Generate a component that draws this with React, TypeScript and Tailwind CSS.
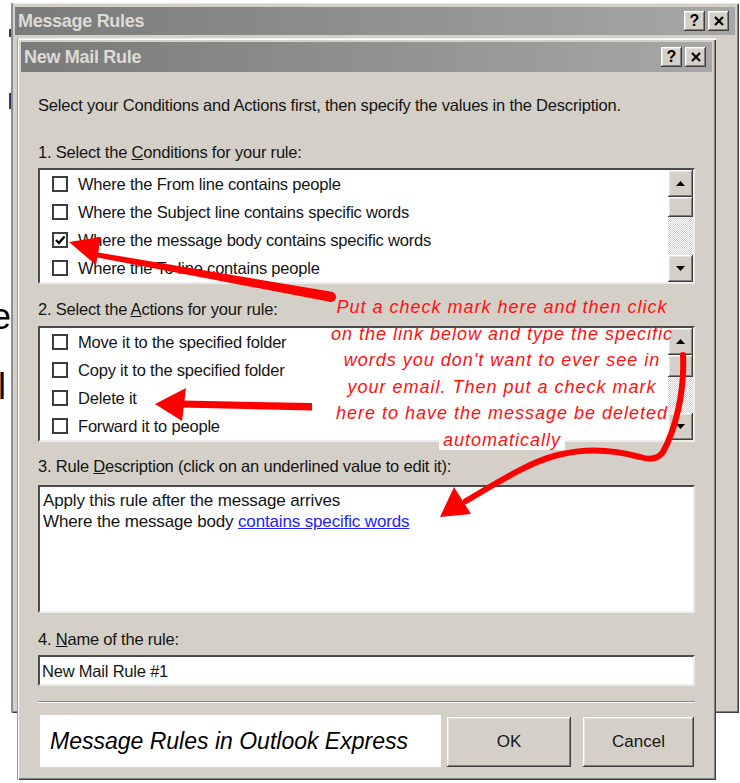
import React from "react";

const CONDITIONS = [
  { label: "Where the From line contains people", checked: false },
  { label: "Where the Subject line contains specific words", checked: false },
  { label: "Where the message body contains specific words", checked: true },
  { label: "Where the To line contains people", checked: false },
];

const ACTIONS = [
  "Move it to the specified folder",
  "Copy it to the specified folder",
  "Delete it",
  "Forward it to people",
];

const raised =
  "bg-[#d4d0c8] shadow-[inset_-1px_-1px_#404040,inset_1px_1px_#ffffff,inset_-2px_-2px_#808080,inset_2px_2px_#e6e4df]";
const sunken =
  "bg-white border-2 border-t-[#4a4a4a] border-l-[#4a4a4a] border-r-[#ececec] border-b-[#ececec]";

function CaptionButton({ children }: { children: React.ReactNode }) {
  return (
    <div className={`${raised} w-[21px] h-[20px] flex items-center justify-center text-black`}>
      {children}
    </div>
  );
}

function TitleBar({ title, className }: { title: string; className: string }) {
  return (
    <div
      className={`flex items-center justify-between bg-linear-to-r from-[#7a7a7a] to-[#a7a7a7] pl-[3px] pr-[6px] ${className}`}
    >
      <span className="text-[18px] font-bold tracking-[-0.3px] text-[#dddbd6]">{title}</span>
      <div className="flex gap-[3px]">
        <CaptionButton>
          <span className="text-[16px] font-bold leading-none">?</span>
        </CaptionButton>
        <CaptionButton>
          <svg width="10" height="10" viewBox="0 0 10 10">
            <path d="M1 1 L9 9 M9 1 L1 9" stroke="#000" strokeWidth="2.2" />
          </svg>
        </CaptionButton>
      </div>
    </div>
  );
}

function Checkbox({ checked }: { checked?: boolean }) {
  return (
    <span className="w-[16px] h-[16px] shrink-0 bg-white border-2 border-[#3e3e3e] flex items-center justify-center">
      {checked && (
        <svg width="12" height="12" viewBox="0 0 12 12">
          <path d="M2 6 L5 9 L10.5 2.5" fill="none" stroke="#000" strokeWidth="2.4" />
        </svg>
      )}
    </span>
  );
}

function Arrow({ up }: { up?: boolean }) {
  return (
    <div className={`${raised} h-[27px] flex items-center justify-center`}>
      <svg width="9" height="5" viewBox="0 0 9 5">
        <polygon points={up ? "0,5 9,5 4.5,0" : "0,0 9,0 4.5,5"} fill="#000" />
      </svg>
    </div>
  );
}

function ScrollBar({ thumb }: { thumb: string }) {
  return (
    <div className="w-[25px] shrink-0 flex flex-col">
      <Arrow up />
      <div className={`${raised} ${thumb}`} />
      <div className="flex-1 bg-[conic-gradient(#ffffff_25%,#d4d0c8_0_50%,#ffffff_0_75%,#d4d0c8_0)] bg-[length:2px_2px]" />
      <Arrow />
    </div>
  );
}

function RuleList({
  items,
  thumb,
  className,
}: {
  items: { label: string; checked: boolean }[];
  thumb: string;
  className: string;
}) {
  return (
    <div className={`${sunken} h-[116px] flex ${className}`}>
      <div className="flex-1 flex flex-col">
        {items.map((it) => (
          <div key={it.label} className="h-[28px] flex items-center gap-[10px] pl-[12px]">
            <Checkbox checked={it.checked} />
            <span>{it.label}</span>
          </div>
        ))}
      </div>
      <ScrollBar thumb={thumb} />
    </div>
  );
}

function Annotations() {
  return (
    <>
      <div className="absolute left-[318px] top-[294px] w-[368px] text-center italic text-[18px] leading-[26.5px] tracking-[1px] text-[#ff1010] pointer-events-none">
        Put a check mark here and then click
        <br />
        on the link below and type the specific
        <br />
        words you don't want to ever see in
        <br />
        your email. Then put a check mark
        <br />
        here to have the message be deleted
        <br />
        <span className="bg-white px-[4px]">automatically</span>
      </div>
      <svg
        className="absolute inset-0 pointer-events-none"
        width="740"
        height="783"
        viewBox="0 0 740 783"
      >
        {/* to the checked condition */}
        <polygon points="92,251.5 333,292 331,302 92,256.5" fill="#f00" />
        <circle cx="331" cy="297" r="5" fill="#f00" />
        <polygon points="69,242 101,237 96,265" fill="#f00" />
        {/* to "Delete it" */}
        <polygon points="182,400.5 312,403 312,410.5 182,407.5" fill="#f00" />
        <polygon points="155,404 186,388 182,421" fill="#f00" />
        {/* down to the description link */}
        <path
          d="M683 355 C685 395 674 432 663 452 Q656 462 640 457 C615 450 585 448 558 455 C530 462 505 478 466 501"
          fill="none"
          stroke="#f00"
          strokeWidth="6"
          strokeLinecap="round"
        />
        <polygon points="440,517 454,487 471,514" fill="#f00" />
      </svg>
    </>
  );
}

export default function App() {
  return (
    <div className="relative flex w-[740px] h-[783px] overflow-hidden bg-white font-['Liberation_Sans',Arial,sans-serif] text-[#141414]">
      {/* bits of the page behind the windows */}
      <div className="w-[11px] shrink-0 overflow-hidden flex flex-col items-end text-black">
        <span className="mt-[29px] w-[2px] h-[8px] bg-[#2f3b5c]" />
        <span className="mt-[56px] w-[2px] h-[16px] bg-[#2f3b5c]" />
        <span className="mt-[188px] text-[36px] leading-[40px]">e</span>
        <span className="mt-[30px] mr-[5px] text-[36px] leading-[40px]">l</span>
      </div>

      {/* Message Rules window */}
      <div className="mt-[3px] w-[728px] h-[710px] shrink-0 bg-[#d4d0c8] p-[4px] shadow-[inset_2px_0_#8f8f8f,inset_0_1px_#e6e6e6,inset_-1px_-1px_#404040,inset_-2px_-2px_#808080]">
        <TitleBar title="Message Rules" className="h-[28px]" />

        {/* New Mail Rule dialog */}
        <div className="ml-[2px] mt-[3px] w-[699px] h-[742px] bg-[#d4d0c8] p-[4px] shadow-[inset_1px_0_#9a9a9a,inset_0_1px_#ececec,inset_2px_2px_#ffffff,inset_-1px_-1px_#404040,inset_-2px_-2px_#808080]">
          <TitleBar title="New Mail Rule" className="h-[30px]" />

          <div className="px-[17px] text-[16.5px] leading-[20px] tracking-[-0.2px]">
            <p className="mt-[23px]">
              Select your Conditions and Actions first, then specify the values in the Description.
            </p>

            <p className="mt-[27px]">
              1. Select the <u>C</u>onditions for your rule:
            </p>
            <RuleList items={CONDITIONS} thumb="h-[20px]" className="mt-[6px]" />

            <p className="mt-[15px]">
              2. Select the <u>A</u>ctions for your rule:
            </p>
            <RuleList
              items={ACTIONS.map((label) => ({ label, checked: false }))}
              thumb="h-[22px]"
              className="mt-[7px]"
            />

            <p className="mt-[14px]">
              3. Rule <u>D</u>escription (click on an underlined value to edit it):
            </p>
            <div className={`${sunken} mt-[9px] h-[128px] px-[3px] pt-[3px] text-[17px] leading-[21px] tracking-[-0.15px]`}>
              <p>Apply this rule after the message arrives</p>
              <p>
                Where the message body{" "}
                <a className="text-[#2323f5] underline">contains specific words</a>
              </p>
            </div>

            <p className="mt-[16px]">
              4. <u>N</u>ame of the rule:
            </p>
            <div className={`${sunken} mt-[6px] h-[31px] flex items-center px-[2px]`}>New Mail Rule #1</div>

            <div className="mt-[15px] h-[2px] border-t border-t-[#8a8a8a] border-b border-b-white" />

            <div className="mt-[12px] flex items-end h-[52px] tracking-normal">
              <div className="ml-[2px] w-[401px] h-full bg-white flex items-center pl-[10px] italic text-[23px] text-black">
                Message Rules in Outlook Express
              </div>
              <button className={`${raised} ml-[6px] w-[124px] h-[50px] text-[17px]`}>OK</button>
              <button className={`${raised} ml-[12px] w-[111px] h-[50px] text-[17px]`}>Cancel</button>
            </div>
          </div>
        </div>
      </div>

      <Annotations />
    </div>
  );
}
